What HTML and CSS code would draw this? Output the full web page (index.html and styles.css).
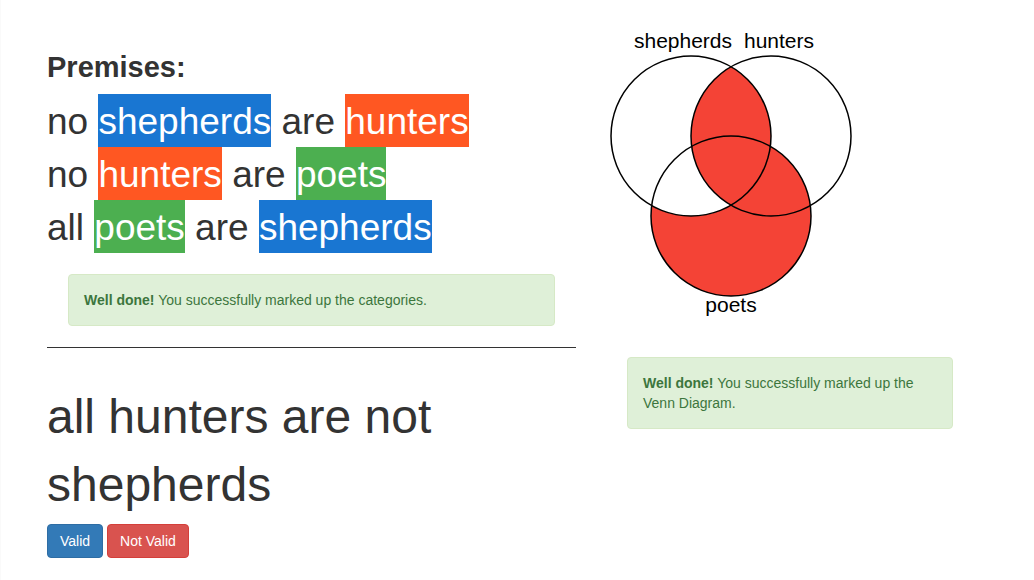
FILE: index.html
```html
<!DOCTYPE html>
<html lang="en">
<head>
<meta charset="utf-8">
<title>Syllogism</title>
<link rel="stylesheet" href="styles.css">
</head>
<body>
<main class="layout">
  <section class="statements">
    <h1 class="heading">Premises:</h1>
    <div class="premises">
      <p class="premise">no <mark class="term blue">shepherds</mark> are <mark class="term orange">hunters</mark></p>
      <p class="premise">no <mark class="term orange">hunters</mark> are <mark class="term green">poets</mark></p>
      <p class="premise">all <mark class="term green">poets</mark> are <mark class="term blue">shepherds</mark></p>
    </div>
    <div class="alert alert-premises" role="alert"><strong>Well done!</strong> You successfully marked up the categories.</div>
    <hr class="divider">
    <p class="conclusion">all hunters are not shepherds</p>
    <div class="actions">
      <button class="btn btn-primary" type="button">Valid</button>
      <button class="btn btn-danger" type="button">Not Valid</button>
    </div>
  </section>
  <section class="diagram">
    <svg class="venn" viewBox="0 0 300 320" width="300" height="320" role="img" aria-label="Venn diagram">
      <defs>
        <clipPath id="in-hunters"><circle cx="171" cy="116" r="80"/></clipPath>
        <mask id="outside-shepherds"><rect width="300" height="320" fill="#fff"/><circle cx="91" cy="116" r="80" fill="#000"/></mask>
      </defs>
      <circle class="region" cx="91" cy="116" r="80" clip-path="url(#in-hunters)"/>
      <circle class="region" cx="131" cy="196" r="80" mask="url(#outside-shepherds)"/>
      <circle class="ring" cx="91" cy="116" r="80"/>
      <circle class="ring" cx="171" cy="116" r="80"/>
      <circle class="ring" cx="131" cy="196" r="80"/>
      <text class="label" x="83" y="28">shepherds</text>
      <text class="label" x="179" y="28">hunters</text>
      <text class="label" x="131" y="292">poets</text>
    </svg>
    <div class="alert alert-venn" role="alert"><strong>Well done!</strong> You successfully marked up the Venn Diagram.</div>
  </section>
</main>
</body>
</html>
```
FILE: styles.css
```css
* { box-sizing: border-box; }
body {
  margin: 0;
  background: #fff;
  color: #333;
  font: 14px/20px "Liberation Sans", Arial, sans-serif;
}
.layout {
  display: grid;
  grid-template-columns: minmax(0, 529fr) minmax(0, 376fr);
  gap: 24px;
  min-height: 100vh;
  padding: 20px 58px 20px 46px;
  border-left: 1px solid #fafafa;
}
.statements { padding-top: 29px; }
.heading { margin: 0 0 8px; font-size: 29px; line-height: 37px; font-weight: 700; }
.premise { margin: 0; font-size: 37px; line-height: 51px; }
.term { display: inline-block; padding-top: 2px; color: #fff; }
.blue { background: #1976d2; }
.orange { background: #ff5722; }
.green { background: #4caf50; }
.alert {
  padding: 15px;
  border: 1px solid #d6e9c6;
  border-radius: 4px;
  background: #dff0d8;
  color: #3c763d;
}
.alert-premises { margin: 21px 21px 0; }
.alert-venn { margin: 17px 23px 0 27px; }
.divider { height: 1px; margin: 21px 0 35px; border: 0; background: #333; }
.conclusion { margin: 0; font-size: 48px; line-height: 68px; }
.actions { display: flex; gap: 4px; margin-top: 5px; }
.btn {
  padding: 6px 12px;
  border: 1px solid;
  border-radius: 4px;
  color: #fff;
  font: inherit;
  cursor: pointer;
}
.btn-primary { background: #337ab7; border-color: #2e6da4; }
.btn-danger { background: #d9534f; border-color: #d43f3a; }
.venn { display: block; }
.region { fill: #f44336; }
.ring { fill: none; stroke: #000; stroke-width: 1.5; }
.label { fill: #000; font-size: 21px; text-anchor: middle; }
```
